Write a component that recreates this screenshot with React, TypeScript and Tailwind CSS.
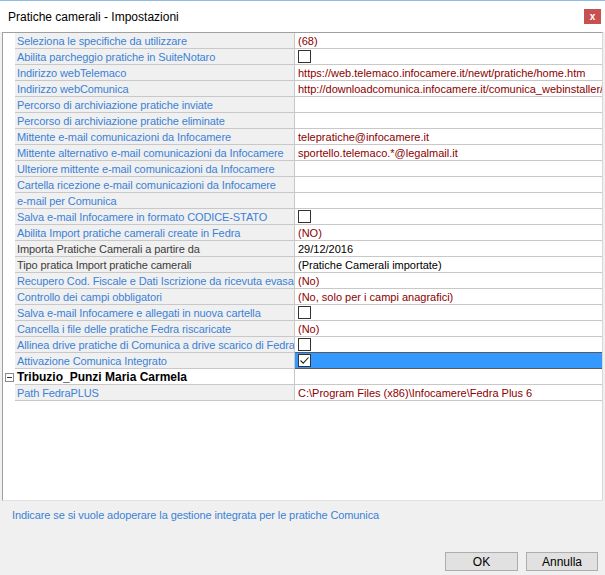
import React from "react";

type Row = {
    label: string;
    value?: string;
    kind?: "text" | "check" | "checked";
    labelTone?: "blue" | "gray";
    valueTone?: "red" | "black";
    selected?: boolean;
};

const rows: Row[] = [
    { label: "Seleziona le specifiche da utilizzare", value: "(68)" },
    { label: "Abilita parcheggio pratiche in SuiteNotaro", kind: "check" },
    { label: "Indirizzo webTelemaco", value: "https://web.telemaco.infocamere.it/newt/pratiche/home.htm" },
    { label: "Indirizzo webComunica", value: "http://downloadcomunica.infocamere.it/comunica_webinstaller/" },
    { label: "Percorso di archiviazione pratiche inviate" },
    { label: "Percorso di archiviazione pratiche eliminate" },
    { label: "Mittente e-mail comunicazioni da Infocamere", value: "telepratiche@infocamere.it" },
    { label: "Mittente alternativo e-mail comunicazioni da Infocamere", value: "sportello.telemaco.*@legalmail.it" },
    { label: "Ulteriore mittente e-mail comunicazioni da Infocamere" },
    { label: "Cartella ricezione e-mail comunicazioni da Infocamere" },
    { label: "e-mail per Comunica" },
    { label: "Salva e-mail Infocamere in formato CODICE-STATO", kind: "check" },
    { label: "Abilita Import pratiche camerali create in Fedra", value: "(NO)" },
    { label: "Importa Pratiche Camerali a partire da", value: "29/12/2016", labelTone: "gray", valueTone: "black" },
    { label: "Tipo pratica Import pratiche camerali", value: "(Pratiche Camerali importate)", labelTone: "gray", valueTone: "black" },
    { label: "Recupero Cod. Fiscale e Dati Iscrizione da ricevuta evasa", value: "(No)" },
    { label: "Controllo dei campi obbligatori", value: "(No, solo per i campi anagrafici)" },
    { label: "Salva e-mail Infocamere e allegati in nuova cartella", kind: "check" },
    { label: "Cancella i file delle pratiche Fedra riscaricate", value: "(No)" },
    { label: "Allinea drive pratiche di Comunica a drive scarico di Fedra", kind: "check" },
    { label: "Attivazione Comunica Integrato", kind: "checked", selected: true },
];

function CheckBox({ checked }: { checked?: boolean }) {
    return (
        <span className="w-[13px] h-[13px] border border-[#333333] bg-white flex items-center justify-center">
            {checked && (
                <svg width="11" height="11" viewBox="0 0 11 11">
                    <path d="M1.5 5.5 L4.2 8.2 L9.5 2.5" fill="none" stroke="#222" strokeWidth="1.1" />
                </svg>
            )}
        </span>
    );
}

function PropRow({ row }: { row: Row }) {
    const labelColor = row.labelTone === "gray" ? "text-[#3c3c3c]" : "text-[#3b82d6]";
    const valueColor = row.valueTone === "black" ? "text-black" : "text-[#8b0000]";
    return (
        <div className="flex h-[16px]">
            <div className="w-[12px] bg-white" />
            <div className={`w-[280px] shrink-0 bg-[#f0f0f0] border-b border-r border-[#c8c8c8] pl-[2px] leading-[16px] tracking-[-0.1px] whitespace-nowrap overflow-hidden ${labelColor}`}>
                {row.label}
            </div>
            <div
                className={`flex-1 min-w-0 border-b pl-[3px] flex items-center whitespace-nowrap overflow-hidden ${
                    row.selected ? "bg-[#3399ff] border-t border-[#5a5a5a] -mt-px" : "bg-white border-[#c8c8c8]"
                } ${valueColor}`}
            >
                {row.kind === "check" && <CheckBox />}
                {row.kind === "checked" && <CheckBox checked />}
                {!row.kind && row.value && <span className="leading-[16px]">{row.value}</span>}
            </div>
        </div>
    );
}

export default function App() {
    return (
        <div className="w-[605px] h-[575px] bg-[#f0f0f0] flex flex-col overflow-hidden font-['Liberation_Sans',Arial,sans-serif]">
            <div className="h-[32px] bg-white border-t border-[#8fbbe6] flex items-center justify-between pl-[8px] pr-[4px]">
                <span className="text-[12px] text-black">Pratiche camerali - Impostazioni</span>
                <span className="w-[17px] h-[15px] bg-[#c75050] text-white text-[10px] font-bold flex items-center justify-center leading-none">x</span>
            </div>
            <div className="mx-[2px] h-[469px] bg-white border border-[#a0a0a0] border-r-[#d8d8d8] border-b-[#e0e0e0] text-[11px]">
                {rows.map((r, i) => (
                    <PropRow key={i} row={r} />
                ))}
                <div className="flex h-[16px]">
                    <div className="w-[12px] flex items-center justify-center">
                        <span className="w-[9px] h-[9px] border border-[#8a8a8a] flex items-center justify-center">
                            <span className="w-[5px] h-px bg-[#333]" />
                        </span>
                    </div>
                    <div className="w-[280px] shrink-0 bg-white border-b border-r border-[#c8c8c8] pl-[2px] leading-[16px] font-bold text-[12px] text-black whitespace-nowrap">
                        Tribuzio_Punzi Maria Carmela
                    </div>
                    <div className="flex-1 border-b border-[#c8c8c8]" />
                </div>
                <PropRow row={{ label: "Path FedraPLUS", value: "C:\\Program Files (x86)\\Infocamere\\Fedra Plus 6" }} />
            </div>
            <div className="pl-[12px] pt-[6px] text-[11px] tracking-[-0.1px] text-[#3b82d6]">
                Indicare se si vuole adoperare la gestione integrata per le pratiche Comunica
            </div>
            <div className="flex justify-end gap-[8px] pr-[7px] mt-auto mb-[4px]">
                <button className="w-[73px] h-[19px] bg-[#e1e1e1] border border-[#adadad] text-[12px] text-black leading-none">OK</button>
                <button className="w-[72px] h-[19px] bg-[#e1e1e1] border border-[#adadad] text-[12px] text-black leading-none">Annulla</button>
            </div>
        </div>
    );
}
